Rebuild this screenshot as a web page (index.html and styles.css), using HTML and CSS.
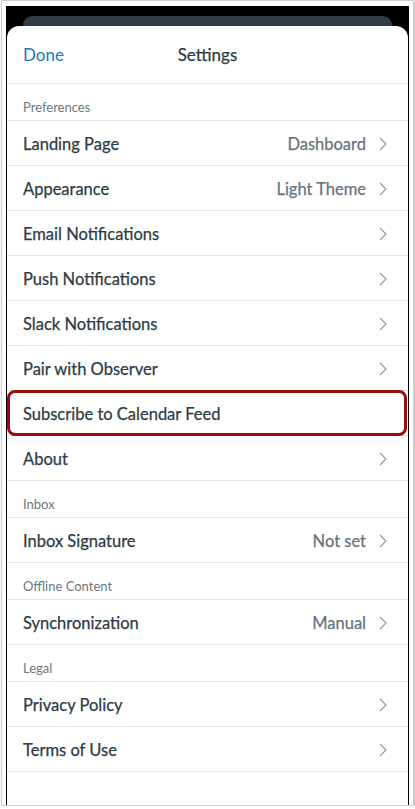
FILE: index.html
```html
<!DOCTYPE html>
<html lang="en">
<head>
    <meta charset="UTF-8">
    <meta name="viewport" content="width=device-width, initial-scale=1.0">
    <title>Settings</title>
    <link rel="stylesheet" href="styles.css">
</head>
<body>
    <div class="frame">
        <div class="screen">
            <div class="back-card"></div>
            <div class="sheet">
                <div class="nav">
                    <span class="done">Done</span>
                    <span class="title">Settings</span>
                    <span class="spacer"></span>
                </div>

                <div class="section">Preferences</div>
                <div class="row">
                    <span class="label">Landing Page</span>
                    <span class="value">Dashboard</span>
                    <svg class="chev" viewBox="0 0 8 14"><polyline points="1,1 7,7 1,13"/></svg>
                </div>
                <div class="row">
                    <span class="label">Appearance</span>
                    <span class="value">Light Theme</span>
                    <svg class="chev" viewBox="0 0 8 14"><polyline points="1,1 7,7 1,13"/></svg>
                </div>
                <div class="row">
                    <span class="label">Email Notifications</span>
                    <svg class="chev" viewBox="0 0 8 14"><polyline points="1,1 7,7 1,13"/></svg>
                </div>
                <div class="row">
                    <span class="label">Push Notifications</span>
                    <svg class="chev" viewBox="0 0 8 14"><polyline points="1,1 7,7 1,13"/></svg>
                </div>
                <div class="row">
                    <span class="label">Slack Notifications</span>
                    <svg class="chev" viewBox="0 0 8 14"><polyline points="1,1 7,7 1,13"/></svg>
                </div>
                <div class="row">
                    <span class="label">Pair with Observer</span>
                    <svg class="chev" viewBox="0 0 8 14"><polyline points="1,1 7,7 1,13"/></svg>
                </div>
                <div class="row highlight">
                    <span class="label">Subscribe to Calendar Feed</span>
                </div>
                <div class="row">
                    <span class="label">About</span>
                    <svg class="chev" viewBox="0 0 8 14"><polyline points="1,1 7,7 1,13"/></svg>
                </div>

                <div class="section">Inbox</div>
                <div class="row">
                    <span class="label">Inbox Signature</span>
                    <span class="value">Not set</span>
                    <svg class="chev" viewBox="0 0 8 14"><polyline points="1,1 7,7 1,13"/></svg>
                </div>

                <div class="section">Offline Content</div>
                <div class="row">
                    <span class="label">Synchronization</span>
                    <span class="value">Manual</span>
                    <svg class="chev" viewBox="0 0 8 14"><polyline points="1,1 7,7 1,13"/></svg>
                </div>

                <div class="section">Legal</div>
                <div class="row">
                    <span class="label">Privacy Policy</span>
                    <svg class="chev" viewBox="0 0 8 14"><polyline points="1,1 7,7 1,13"/></svg>
                </div>
                <div class="row">
                    <span class="label">Terms of Use</span>
                    <svg class="chev" viewBox="0 0 8 14"><polyline points="1,1 7,7 1,13"/></svg>
                </div>
            </div>
        </div>
    </div>
</body>
</html>
```

FILE: styles.css
```css
body {
    margin: 0;
    padding: 0;
    background-color: #fff;
    font-family: Lato, "Liberation Sans", sans-serif;
}

.frame {
    box-sizing: border-box;
    width: 413px;
    height: 806px;
    margin: 0 0 0 1px;
    border: 1px solid #d0d0d0;
    padding: 5px 4px 0 4px;
    box-shadow: 1px 2px 2px rgba(0, 0, 0, 0.35);
    background: #fff;
}

.screen {
    height: 100%;
    background-color: #000;
    padding-top: 10px;
    box-sizing: border-box;
    display: flex;
    flex-direction: column;
}

.back-card {
    height: 20px;
    margin: 0 17px;
    background-color: #2f3b46;
    border-radius: 9px 9px 0 0;
}

.sheet {
    flex: 1;
    margin: -10px 1px 0 1px;
    background-color: #fff;
    border-radius: 12px 12px 0 0;
}

.nav {
    display: grid;
    grid-template-columns: 1fr auto 1fr;
    align-items: center;
    height: 57px;
    padding: 0 16px;
    border-bottom: 1px solid #e3e5e7;
    font-size: 17px;
}

.done {
    color: #2479bd;
}

.title {
    color: #2d3b45;
    -webkit-text-stroke: 0.25px #2d3b45;
}

.section {
    display: flex;
    align-items: flex-end;
    padding: 0 16px 5px 16px;
    box-sizing: border-box;
    height: 37px;
    border-bottom: 1px solid #e3e5e7;
    font-size: 13px;
    line-height: 16px;
    color: #6b7780;
}

.row {
    position: relative;
    box-sizing: border-box;
    height: 45px;
    display: flex;
    align-items: center;
    padding: 1px 21px 0 16px;
    border-bottom: 1px solid #e3e5e7;
    font-size: 16.5px;
}

.label {
    flex: 1;
    color: #2d3b45;
    -webkit-text-stroke: 0.25px #2d3b45;
}

.value {
    color: #67737d;
    margin-right: 13px;
    -webkit-text-stroke: 0.25px #67737d;
}

.chev {
    width: 8px;
    height: 14px;
    fill: none;
    stroke: #8d97a0;
    stroke-width: 1.1;
}

.highlight::after {
    content: "";
    position: absolute;
    top: -1px;
    bottom: -1px;
    left: 0;
    right: 1px;
    border: 3px solid #9a0d0d;
    border-radius: 8px;
}
```
